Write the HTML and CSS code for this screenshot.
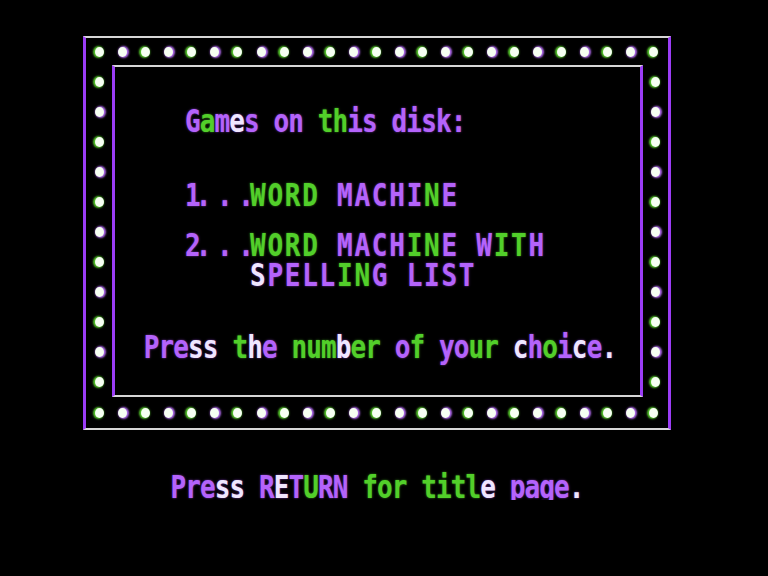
FILE: index.html
```html
<!DOCTYPE html>
<html lang="en">
<head>
    <meta charset="UTF-8">
    <title>Word Machine</title>
    <link rel="stylesheet" href="styles.css">
</head>
<body>
<div class="screen">
    <div class="frame">
        <div class="dots row top"></div>
        <div class="dots col left"></div>
        <div class="panel">
            <p class="heading">G<span class="g">a</span>m<span class="w">e</span>s on <span class="g">th</span>is disk:</p>
            <div class="menu">
                <div class="item">
                    <span class="num">1. . .</span>
                    <span class="title">
                        <span class="line"><span class="g">WORD</span> MACHI<span class="g">N</span>E</span>
                    </span>
                </div>
                <div class="item">
                    <span class="num">2. . .</span>
                    <span class="title">
                        <span class="line"><span class="g">WORD</span> MACH<span class="g">IN</span>E W<span class="g">IT</span>H</span>
                        <span class="line"><span class="w">S</span>PELL<span class="g">IN</span>G LIST</span>
                    </span>
                </div>
            </div>
            <p class="prompt">Pre<span class="w">ss</span> <span class="g">t</span><span class="w">h</span>e <span class="g">num</span><span class="w">b</span><span class="g">er</span> o<span class="g">f</span> yo<span class="g">ur</span> <span class="w">c</span>h<span class="g">o</span>i<span class="w">c</span>e<span class="w">.</span></p>
        </div>
        <div class="dots col right"></div>
        <div class="dots row bottom"></div>
    </div>
    <p class="footer">Pre<span class="w">ss</span> R<span class="w">E</span>T<span class="g">U</span>RN <span class="g">for</span> <span class="g">titl</span><span class="w">e</span> page<span class="w">.</span></p>
</div>

<script>
    // fill the marquee borders with light bulbs
    document.querySelectorAll('.dots').forEach(function (strip) {
        const count = strip.classList.contains('row') ? 25 : 11;
        for (let i = 0; i < count; i++) {
            const dot = document.createElement('span');
            dot.className = 'dot';
            strip.appendChild(dot);
        }
    });
</script>
</body>
</html>
```

FILE: styles.css
```css
* {
    box-sizing: border-box;
}

body {
    margin: 0;
    background: #000;
    font-family: "DejaVu Sans Mono", monospace;
    font-weight: bold;
    font-size: 26px;
    color: #b463fb;
}

p {
    margin: 0;
}

.screen {
    width: 588px;
    margin: 36px 0 0 83px;
}

/* outer box: white rules across, violet rules down */
.frame {
    display: grid;
    grid-template-columns: 26px 1fr 25px;
    grid-template-rows: 27px 332px 31px;
    height: 394px;
    border-top: 2px solid #d6d6d6;
    border-bottom: 2px solid #d6d6d6;
    border-left: 3px solid #9b3df6;
    border-right: 3px solid #9b3df6;
}

.dots {
    display: flex;
    justify-content: space-between;
    align-items: center;
}

.dots.row {
    grid-column: 1 / -1;
    padding: 0 10px 0 9px;
}

.dots.col {
    flex-direction: column;
    padding: 12px 0 10px;
}

.dot {
    display: block;
    width: 9px;
    height: 10px;
    border-radius: 50%;
    background: #f6fff2;
    box-shadow: -1px 0 2px 1px #56c92c;
}

.dot:nth-child(even) {
    box-shadow: 1px 0 2px 1px #b36cf0;
}

.panel {
    padding: 42px 0 0 70px;
    border-top: 2px solid #d6d6d6;
    border-bottom: 2px solid #d6d6d6;
    border-left: 3px solid #9b3df6;
    border-right: 3px solid #9b3df6;
}

/* the screen font is tall and narrow: 25px lines stretched to 30 */
.heading,
.item,
.prompt,
.footer {
    line-height: 25px;
    letter-spacing: -0.9px;
    white-space: nowrap;
    text-shadow: 0 0 2px rgba(170, 80, 255, 0.7);
}

.heading,
.prompt,
.footer,
.num,
.line {
    transform: scaleY(1.2);
}

.menu {
    display: flex;
    flex-direction: column;
    gap: 25px;
    margin-top: 49px;
}

.item {
    display: grid;
    grid-template-columns: 65px auto;
    align-items: start;
}

.num {
    display: block;
    letter-spacing: -5px;
}

.title {
    letter-spacing: 1.75px;
}

.line {
    display: block;
}

.line + .line {
    margin-top: 5px;
}

.prompt {
    margin: 47px 20px 0 -45px;
    text-align: center;
}

.footer {
    margin-top: 45px;
    text-align: center;
}

.g {
    color: #52cf2a;
    text-shadow: 0 0 2px rgba(80, 200, 40, 0.7);
}

.w {
    color: #efe6ff;
}
```
